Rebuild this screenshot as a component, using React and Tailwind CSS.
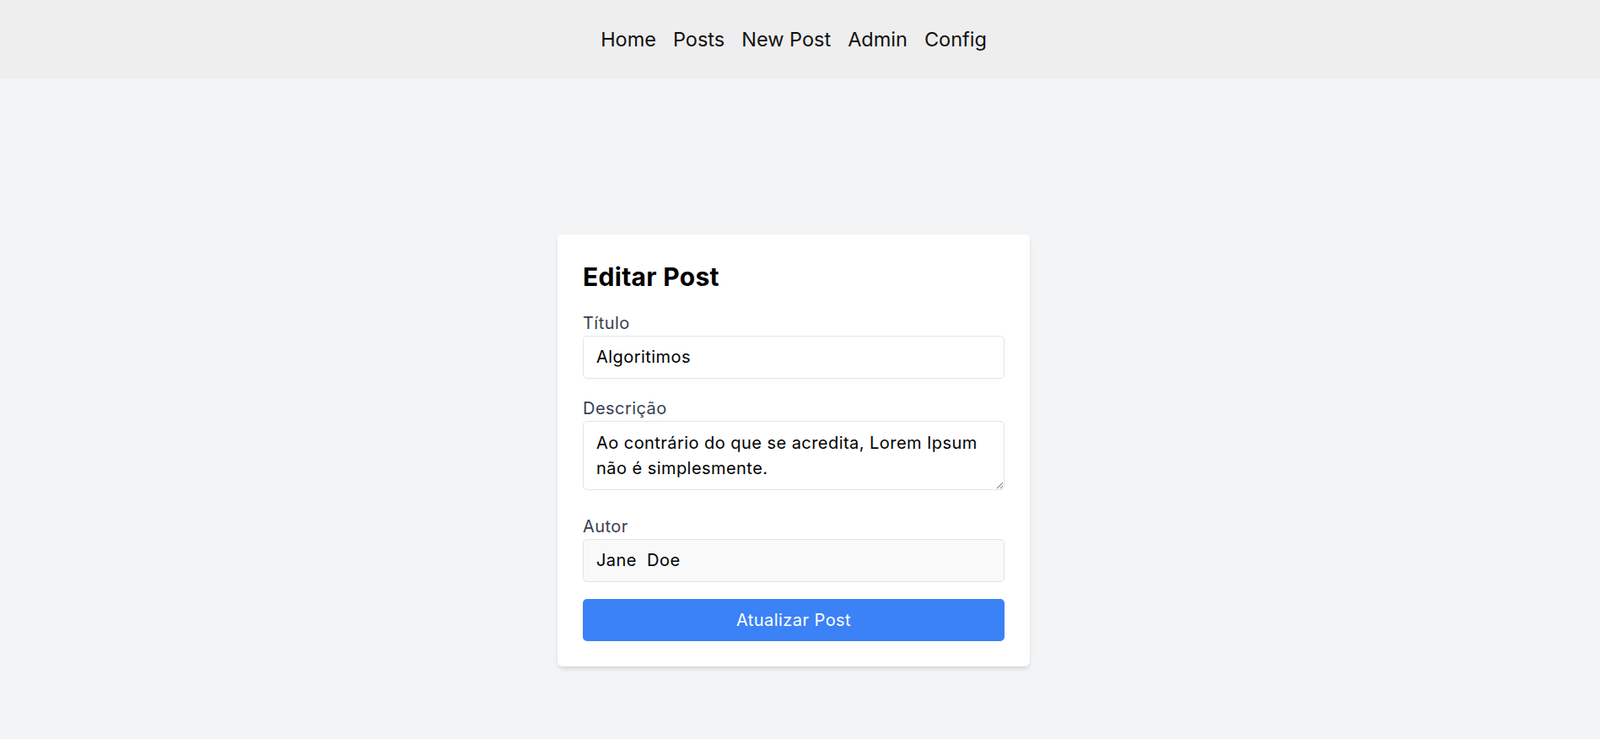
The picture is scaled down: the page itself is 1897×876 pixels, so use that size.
import { useState } from "react";

const links = ["Home", "Posts", "New Post", "Admin", "Config"];

export default function App() {
  const [title, setTitle] = useState("Algoritimos");
  const [description, setDescription] = useState(
    "Ao contrário do que se acredita, Lorem Ipsum não é simplesmente."
  );

  return (
    <div
      className="min-h-screen bg-[#f3f4f6] text-black"
      style={{ fontFamily: "Inter, 'Noto Sans', sans-serif" }}
    >
      {/* Navbar */}
      <nav className="bg-[#eeeeee] h-[93px] flex items-center justify-center pr-[15px]">
        <ul className="flex items-center gap-[20px] text-[23.5px] leading-[35px] text-[#111111]">
          {links.map((link) => (
            <li key={link}>
              <a href="#" className="hover:underline">
                {link}
              </a>
            </li>
          ))}
        </ul>
      </nav>

      {/* Edit form */}
      <main className="min-h-[876px] pt-[5px] pr-[15px] flex items-center justify-center">
        <form
          onSubmit={(e) => e.preventDefault()}
          className="w-[560px] bg-white rounded-[6px] shadow-md p-[30px] tracking-[0.45px]"
        >
          <h2 className="text-[30px] leading-[40px] font-bold tracking-[0.3px] mb-[20px]">
            Editar Post
          </h2>

          <div className="mb-[20px]">
            <label className="block text-[20px] leading-[30px] text-[#374151]">
              Título
            </label>
            <input
              type="text"
              value={title}
              onChange={(e) => setTitle(e.target.value)}
              className="block w-full border border-[#e2e4e8] rounded-[5px] px-[15px] py-[10px] text-[20px] leading-[30px] h-[51px] text-black outline-none"
            />
          </div>

          <div className="mb-[28px]">
            <label className="block text-[20px] leading-[30px] text-[#374151]">
              Descrição
            </label>
            <textarea
              rows={2}
              value={description}
              onChange={(e) => setDescription(e.target.value)}
              className="block w-full border border-[#e2e4e8] rounded-[5px] px-[15px] py-[10px] text-[20px] leading-[30px] text-black outline-none"
            />
          </div>

          <div className="mb-[20px]">
            <label className="block text-[20px] leading-[30px] text-[#374151]">
              Autor
            </label>
            <input
              type="text"
              value="Jane  Doe"
              readOnly
              className="block w-full border border-[#e2e4e8] rounded-[5px] px-[15px] py-[10px] text-[20px] leading-[30px] h-[51px] bg-[#f9f9f9] text-black outline-none"
            />
          </div>

          <button
            type="submit"
            className="w-full h-[50px] bg-[#3b82f6] hover:bg-blue-600 text-white text-[20px] leading-[30px] rounded-[5px]"
          >
            Atualizar Post
          </button>
        </form>
      </main>
    </div>
  );
}
